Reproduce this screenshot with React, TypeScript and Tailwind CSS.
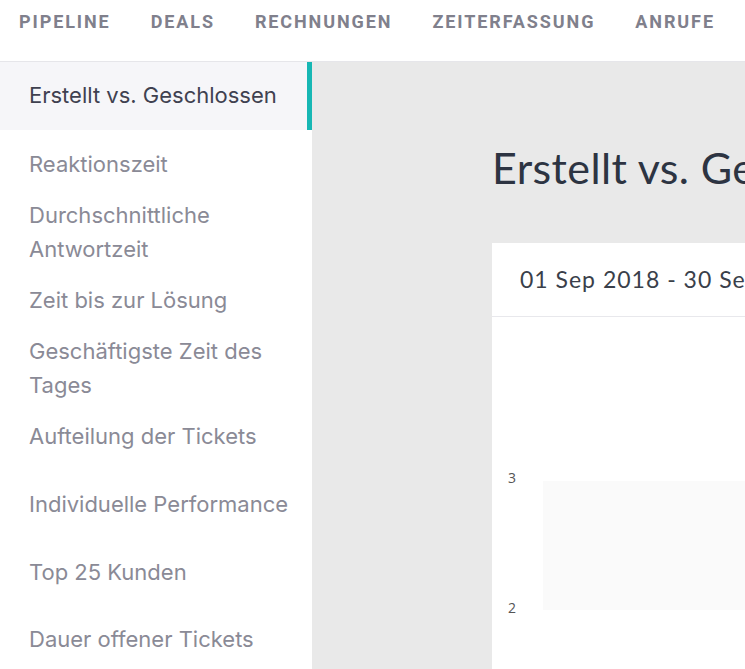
import React from 'react';

const navItems = ['Pipeline', 'Deals', 'Rechnungen', 'Zeiterfassung', 'Anrufe'];

const reports: { label: string; cls: string }[] = [
  { label: 'Reaktionszeit', cls: 'py-[8.5px]' },
  { label: 'Durchschnittliche Antwortzeit', cls: 'py-[8.5px]' },
  { label: 'Zeit bis zur Lösung', cls: 'py-[8.5px]' },
  { label: 'Geschäftigste Zeit des Tages', cls: 'py-[8.5px]' },
  { label: 'Aufteilung der Tickets', cls: 'pt-[8.5px] pb-[17px]' },
  { label: 'Individuelle Performance', cls: 'py-[17px]' },
  { label: 'Top 25 Kunden', cls: 'py-[17px]' },
  { label: 'Dauer offener Tickets', cls: 'py-[16.5px]' },
];

export default function App() {
  return (
    <div className="h-[669px] w-[745px] overflow-hidden bg-[#e9e9e9] flex flex-col">
      <nav className="h-[62px] shrink-0 bg-white border-b border-[#e6e6ea] flex items-start pl-[19px] pt-[10px] gap-[40px]">
        {navItems.map((n) => (
          <a
            key={n}
            href="#"
            className="uppercase font-bold text-[18px] leading-[24px] tracking-[1.9px] text-[#80808c] font-['Roboto',sans-serif]"
          >
            {n}
          </a>
        ))}
      </nav>

      <div className="flex flex-1 min-h-0">
        <aside className="w-[312px] shrink-0 bg-white font-['Inter',sans-serif] text-[22px] leading-[34px]">
          <div className="h-[68px] bg-[#f6f6f9] border-r-[5px] border-[#17b7b4] flex items-center pl-[29px] pb-[2px] text-[#3f4150]">
            Erstellt vs. Geschlossen
          </div>
          <ul className="pt-[8px] pr-[20px]">
            {reports.map((r) => (
              <li key={r.label} className={`pl-[29px] text-[#8a8a96] ${r.cls}`}>
                {r.label}
              </li>
            ))}
          </ul>
        </aside>

        <main className="flex-1 min-w-0 pl-[180px] font-['Lato',sans-serif]">
          <h1 className="pt-[79px] text-[43px] leading-[54px] tracking-[0.4px] text-[#2d3442] whitespace-nowrap">
            Erstellt vs. Geschlossen
          </h1>
          <section className="mt-[48px] bg-white w-[600px]">
            <div className="h-[74px] border-b border-[#e8e8ec] flex items-center pl-[28px] text-[23px] tracking-[1px] text-[#3a3f4a] whitespace-nowrap">
              01 Sep 2018 - 30 Sep 2018
            </div>
            <div className="relative h-[400px]">
              <div className="absolute left-[51px] top-[164px] w-[600px] h-[129px] bg-[#fafafa]" />
              <span className="absolute left-[16px] top-[150px] text-[14px] text-[#555] font-['Open_Sans',sans-serif]">3</span>
              <span className="absolute left-[16px] top-[280px] text-[14px] text-[#555] font-['Open_Sans',sans-serif]">2</span>
            </div>
          </section>
        </main>
      </div>
    </div>
  );
}
